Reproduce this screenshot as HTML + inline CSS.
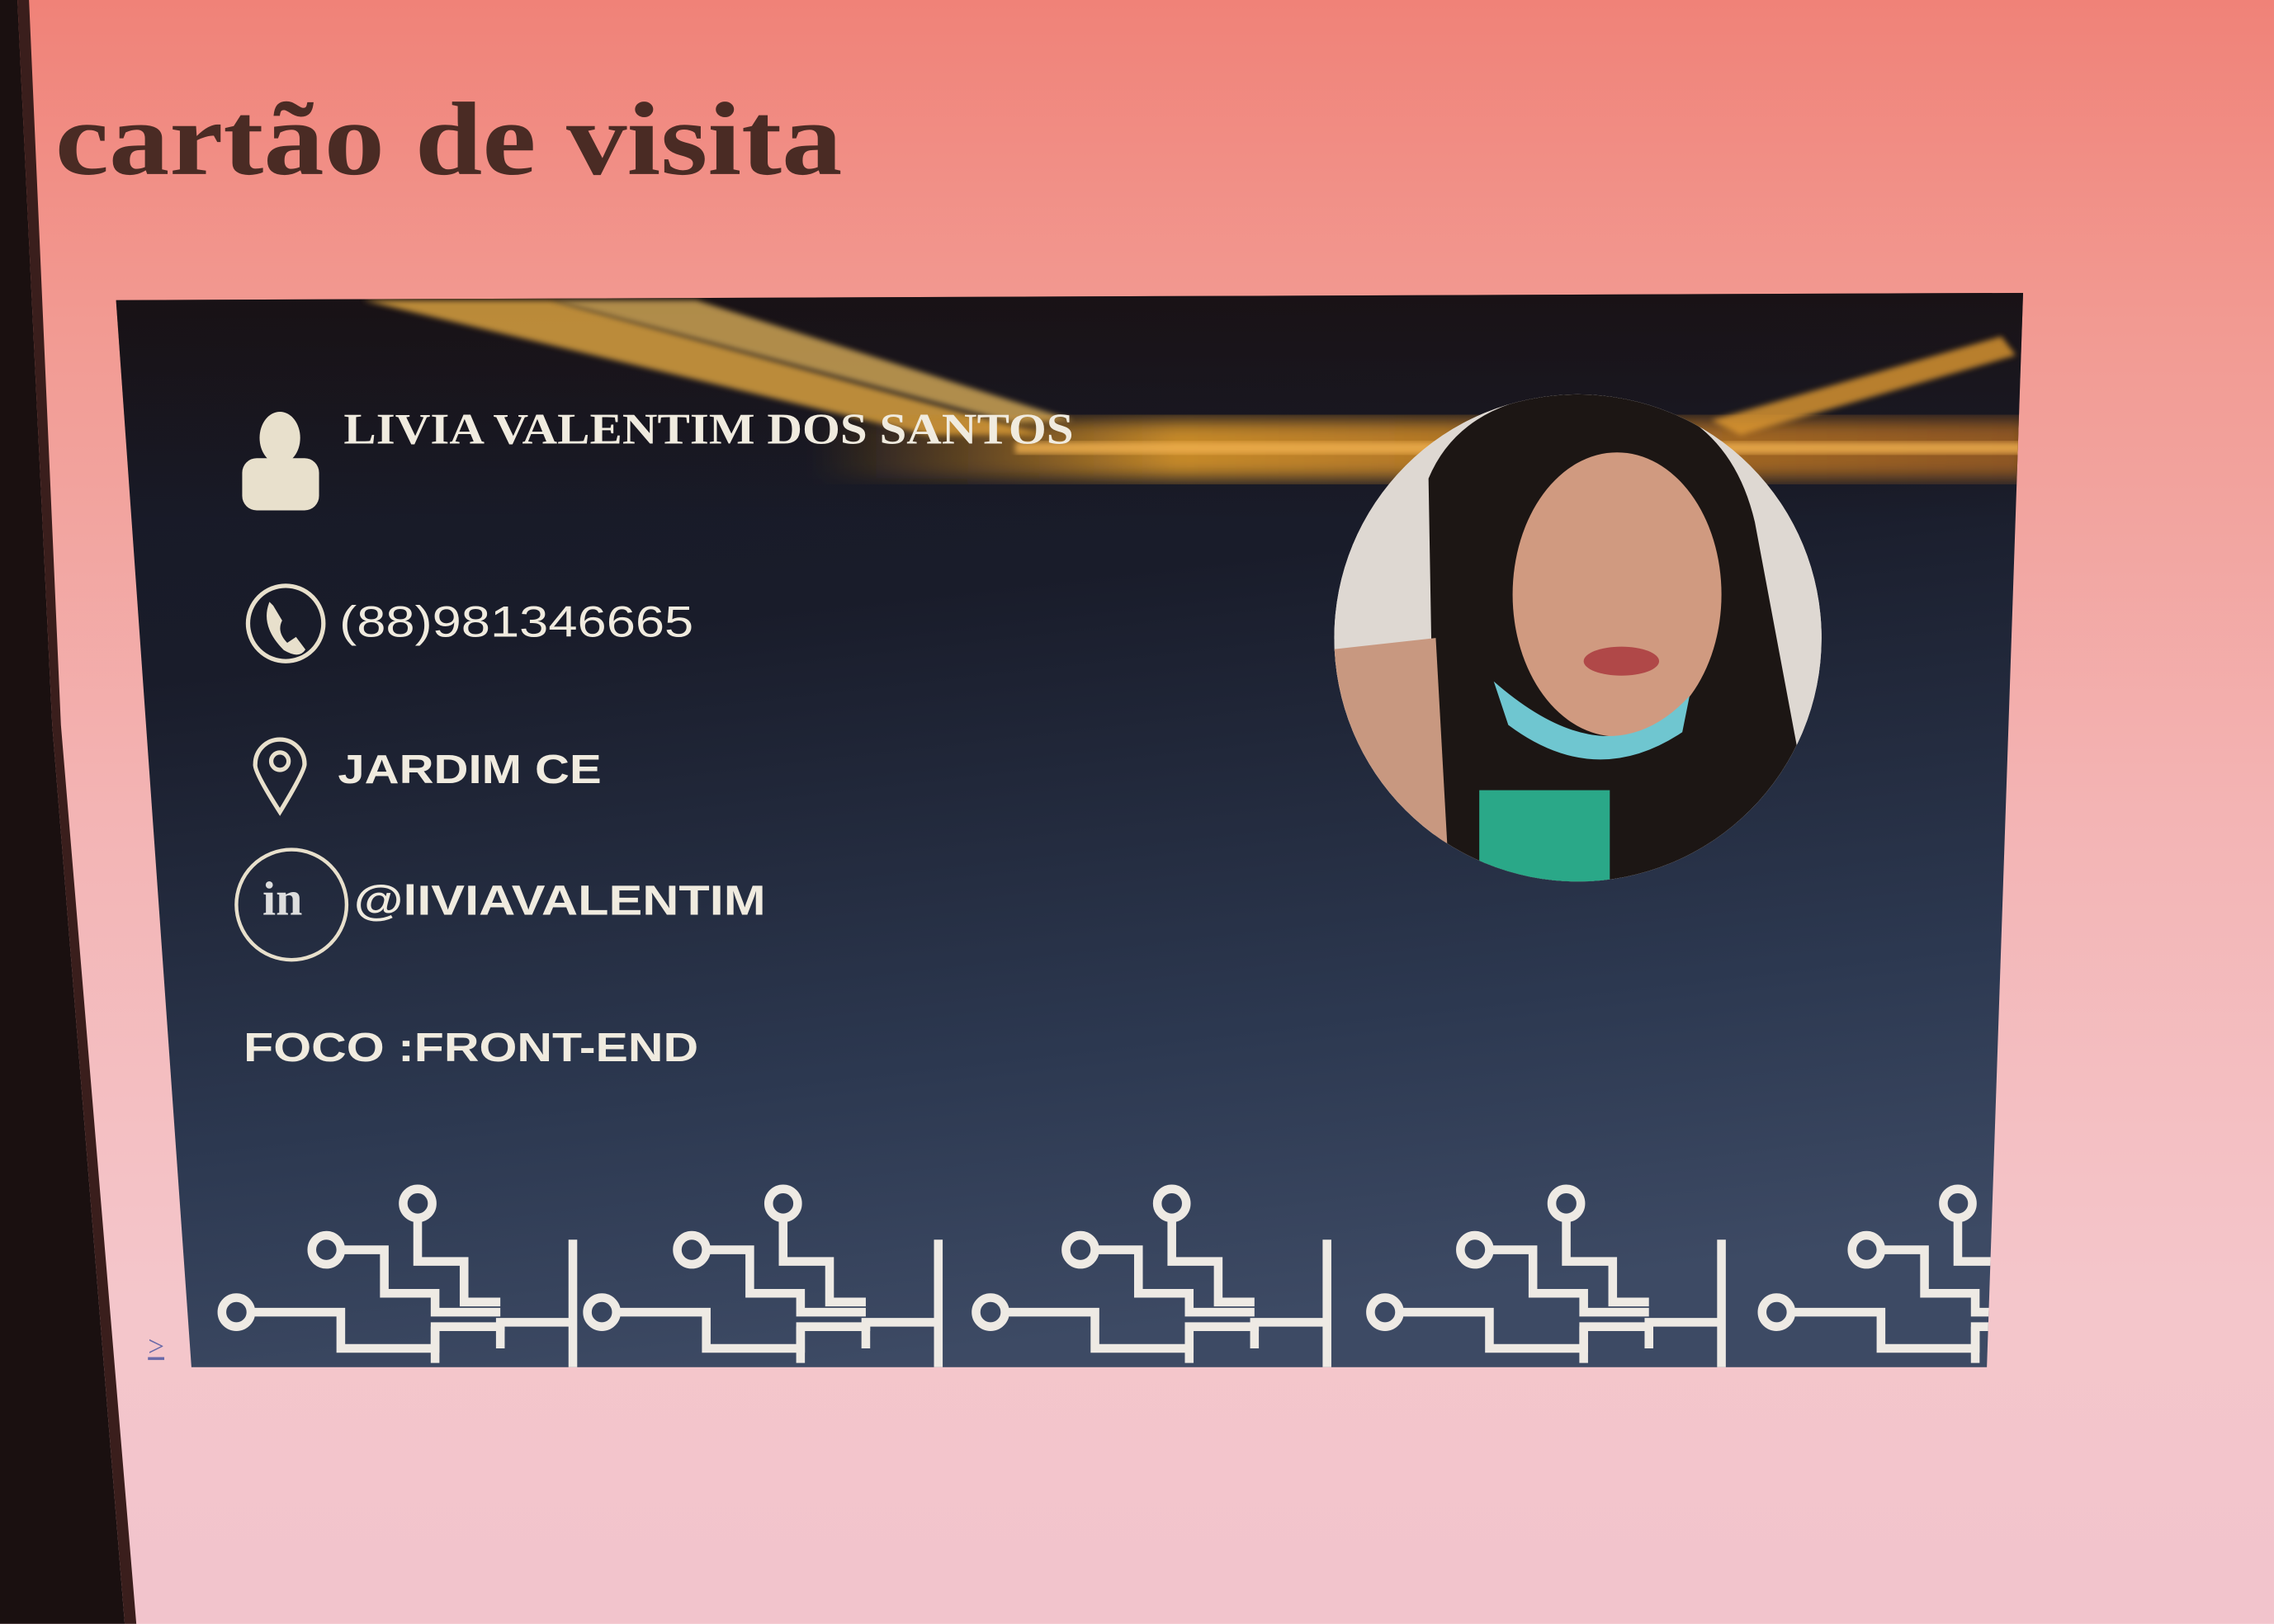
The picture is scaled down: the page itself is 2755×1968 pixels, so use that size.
<!DOCTYPE html>
<html><head><meta charset="utf-8"><style>
html,body{margin:0;padding:0;width:2755px;height:1968px;overflow:hidden;}
#s{position:absolute;left:0;top:0;width:1568px;height:1120px;transform:scale(1.75702);transform-origin:0 0;
background:linear-gradient(180deg,#f08278 0%,#f29a92 20%,#f3b4b4 50%,#f4c6cb 80%,#f2c4cc 100%);overflow:hidden;}
.bez{position:absolute;left:0;top:0;width:100%;height:100%;}
.t{position:absolute;color:#f0ebdf;white-space:nowrap;transform-origin:0 50%;}
</style></head><body><div id="s">
<svg class="bez" viewBox="0 0 1568 1120"><polygon points="0,0 12,0 36,500 86,1120 0,1120" fill="#1a1010"/><polygon points="12,0 20,0 42,500 94,1120 86,1120 36,500" fill="#3a1e1c"/></svg>
<div class="t" style="left:38px;top:55px;font:bold 72px 'Liberation Serif',serif;color:#4a2b24;transform:scaleX(1.16);">cartão de visita</div>
<svg class="bez" viewBox="0 0 1568 1120">
<defs>
<clipPath id="c"><polygon points="80,207 1395,202 1370,943 132,943"/></clipPath>
<linearGradient id="bg" x1="0" y1="0" x2="0.2" y2="1"><stop offset="0" stop-color="#171824"/><stop offset="0.35" stop-color="#191c2a"/><stop offset="0.75" stop-color="#2c3850"/><stop offset="1" stop-color="#3d4a64"/></linearGradient>
<linearGradient id="gl" x1="0" y1="0" x2="1" y2="0"><stop offset="0" stop-color="#c8801a" stop-opacity="0"/><stop offset="0.3" stop-color="#d9962a" stop-opacity="0.9"/><stop offset="1" stop-color="#c07020" stop-opacity="0.7"/></linearGradient>
<linearGradient id="tb" x1="0" y1="0" x2="0" y2="1"><stop offset="0" stop-color="#1a0c08" stop-opacity="0.6"/><stop offset="1" stop-color="#1a0c08" stop-opacity="0"/></linearGradient>
<filter id="b"><feGaussianBlur stdDeviation="6"/></filter>
<filter id="b2"><feGaussianBlur stdDeviation="2"/></filter>
</defs>
<g clip-path="url(#c)">
<rect x="60" y="190" width="1360" height="780" fill="url(#bg)"/>
<rect x="60" y="190" width="1360" height="170" fill="url(#tb)"/>
<polygon points="250,207 380,207 720,300 640,300" fill="#d8a040" opacity="0.85" filter="url(#b2)"/>
<polygon points="380,207 480,207 740,290 700,292" fill="#f0c060" opacity="0.7" filter="url(#b2)"/>
<rect x="560" y="290" width="840" height="40" fill="url(#gl)" filter="url(#b)"/>
<rect x="700" y="305" width="700" height="8" fill="#f0b050" opacity="0.8" filter="url(#b2)"/>
<polygon points="1180,290 1380,232 1390,245 1200,300" fill="#e09a30" opacity="0.8" filter="url(#b2)"/>
<g fill="none" stroke="#eeeae4" stroke-width="6">
<g id="u">
<circle cx="163" cy="905" r="10"/><path d="M173 905H235V930H300V915H345V912H395"/>
<circle cx="225" cy="862" r="10"/><path d="M235 862H265V892H300V905H345"/>
<circle cx="288" cy="830" r="10"/><path d="M288 840V870H320V898H345"/>
<path d="M300 940V915M395 855V945M345 912V930"/>
</g>
<use href="#u" x="252"/><use href="#u" x="520"/><use href="#u" x="792"/><use href="#u" x="1062"/>
</g>
</g>
<circle cx="1088" cy="440" r="168" fill="#e8e4e0"/>
<clipPath id="p"><circle cx="1088" cy="440" r="168"/></clipPath>
<g clip-path="url(#p)">
<rect x="900" y="260" width="400" height="380" fill="#ded8d2"/>
<path d="M990 620 L985 330 Q1010 270 1100 270 Q1190 275 1210 360 L1240 520 L1220 620Z" fill="#1c1614"/>
<ellipse cx="1115" cy="410" rx="72" ry="98" fill="#d09a80"/>
<path d="M1030 470 Q1110 540 1165 480 L1160 505 Q1100 545 1040 500Z" fill="#6fc6d0"/>
<rect x="1020" y="545" width="90" height="70" fill="#2aa888"/>
<path d="M900 450 L990 440 L1000 620 L900 620Z" fill="#c89880"/>
<ellipse cx="1118" cy="456" rx="26" ry="10" fill="#b04848"/>
</g>
<g fill="#e8e0cc"><ellipse cx="193" cy="302" rx="14" ry="18"/><rect x="167" y="316" width="53" height="36" rx="10"/></g>
<g fill="none" stroke="#e8e0cc" stroke-width="3">
<circle cx="197" cy="430" r="26"/><path d="M186 416 Q180 432 196 448 Q206 454 210 448 L204 440 L198 444 Q190 436 194 428 L188 418Z" fill="#e8e0cc" stroke-width="1"/>
<path d="M193 560 Q175 532 176 527 A17 17 0 1 1 210 527 Q210 532 193 560Z"/><circle cx="193" cy="525" r="6"/>
<circle cx="201" cy="624" r="38" stroke-width="2.5"/>
</g>
</svg>
<div class="t" style="left:181px;top:603px;font:bold 33px 'Liberation Serif',serif;color:#ddd;">in</div>
<div class="t" style="left:237px;top:280px;font:bold 30px 'Liberation Serif',serif;transform:scaleX(1.12);">LIVIA VALENTIM DOS SANTOS</div>
<div class="t" style="left:234px;top:413px;font:30px 'Liberation Sans',sans-serif;transform:scaleX(1.2);">(88)981346665</div>
<div class="t" style="left:233px;top:515px;font:bold 28px 'Liberation Sans',sans-serif;transform:scaleX(1.18);">JARDIM CE</div>
<div class="t" style="left:244px;top:606px;font:bold 29px 'Liberation Sans',sans-serif;transform:scaleX(1.2);">@lIVIAVALENTIM</div>
<div class="t" style="left:168px;top:707px;font:bold 28px 'Liberation Sans',sans-serif;transform:scaleX(1.2);">FOCO :FRONT-END</div>
<div style="position:absolute;left:102px;top:918px;font:20px 'Liberation Serif',serif;color:#6a6aa8;text-decoration:underline;">&gt;</div>
</div></body></html>
